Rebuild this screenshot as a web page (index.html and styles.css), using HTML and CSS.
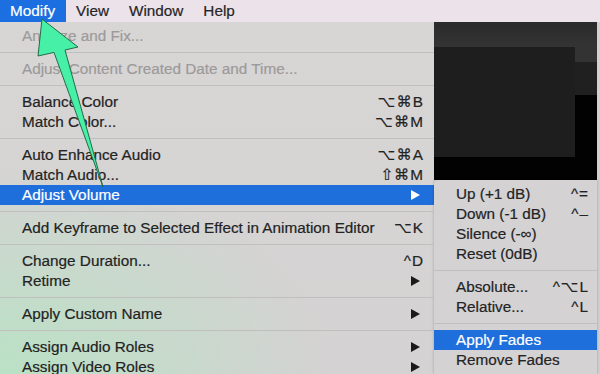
FILE: index.html
```html
<!DOCTYPE html>
<html lang="en">

<head>
    <meta charset="UTF-8">
    <meta name="viewport" content="width=device-width, initial-scale=1.0">
    <title>Modify Menu</title>
    <link rel="stylesheet" href="styles.css">
</head>

<body>
    <nav class="menubar">
        <div class="menubar-item active">Modify</div>
        <div class="menubar-item">View</div>
        <div class="menubar-item">Window</div>
        <div class="menubar-item">Help</div>
    </nav>

    <div class="screen">
        <ul class="menu">
            <li class="item disabled"><span>Analyze and Fix...</span></li>
            <li class="sep"></li>
            <li class="item disabled"><span>Adjust Content Created Date and Time...</span></li>
            <li class="sep"></li>
            <li class="item"><span>Balance Color</span><span class="key">⌥⌘B</span></li>
            <li class="item"><span>Match Color...</span><span class="key">⌥⌘M</span></li>
            <li class="sep"></li>
            <li class="item"><span>Auto Enhance Audio</span><span class="key">⌥⌘A</span></li>
            <li class="item"><span>Match Audio...</span><span class="key">⇧⌘M</span></li>
            <li class="item selected"><span>Adjust Volume</span><span class="arrow"></span></li>
            <li class="sep"></li>
            <li class="item"><span>Add Keyframe to Selected Effect in Animation Editor</span><span class="key">⌥K</span></li>
            <li class="sep"></li>
            <li class="item"><span>Change Duration...</span><span class="key">^D</span></li>
            <li class="item"><span>Retime</span><span class="arrow"></span></li>
            <li class="sep"></li>
            <li class="item"><span>Apply Custom Name</span><span class="arrow"></span></li>
            <li class="sep"></li>
            <li class="item"><span>Assign Audio Roles</span><span class="arrow"></span></li>
            <li class="item"><span>Assign Video Roles</span><span class="arrow"></span></li>
        </ul>

        <div class="side">
            <div class="viewer">
                <div class="viewer-top"></div>
                <div class="viewer-body">
                    <div class="viewer-frame"></div>
                    <div class="viewer-edge"></div>
                </div>
            </div>

            <ul class="menu submenu">
                <li class="item"><span>Up (+1 dB)</span><span class="key">^=</span></li>
                <li class="item"><span>Down (-1 dB)</span><span class="key">^–</span></li>
                <li class="item"><span>Silence (-∞)</span></li>
                <li class="item"><span>Reset (0dB)</span></li>
                <li class="sep"></li>
                <li class="item"><span>Absolute...</span><span class="key">^⌥L</span></li>
                <li class="item"><span>Relative...</span><span class="key">^L</span></li>
                <li class="sep"></li>
                <li class="item selected"><span>Apply Fades</span></li>
                <li class="item"><span>Remove Fades</span></li>
            </ul>
        </div>
    </div>

    <!-- pointer drawn over the menu -->
    <svg class="pointer" width="120" height="200" viewBox="0 0 120 200">
        <polygon points="42,19 78,47 65,50 103,187 54,52.4 38,56" fill="#46f0a6" stroke="#256b4a" stroke-width="1" stroke-linejoin="round" />
    </svg>
</body>

</html>
```

FILE: styles.css
```css
body {
    margin: 0;
    width: 600px;
    height: 374px;
    overflow: hidden;
    position: relative;
    background: #d2d0d1;
    font-family: 'Liberation Sans', 'DejaVu Sans', sans-serif;
    font-size: 15.3px;
    color: #232323;
    -webkit-text-stroke: 0.2px currentColor;
}

.menubar {
    display: flex;
    height: 22px;
    line-height: 22px;
    background: #ece2ea;
}

.menubar-item {
    padding: 0 10px;
    color: #262626;
}

.menubar-item.active {
    padding: 0 11px 0 10px;
    background: #1c6fe0;
    color: #fff;
}

.screen {
    display: flex;
    height: 352px;
}

.menu {
    list-style-type: none;
    margin: 0;
    padding: 4px 0 0;
    width: 434px;
    flex-shrink: 0;
    background:
        radial-gradient(ellipse 330px 210px at 0 100%, rgba(184, 226, 196, 0.95), rgba(214, 211, 211, 0)),
        linear-gradient(#d8d5d5, #d4d2d2);
}

.item {
    display: flex;
    justify-content: space-between;
    align-items: center;
    height: 20px;
    line-height: 20px;
    padding: 0 11px 0 22px;
    white-space: nowrap;
}

.item.disabled {
    color: #9c9a9a;
}

.item.selected {
    background: #1e6edc;
    color: #fff;
}

.sep {
    height: 13px;
    position: relative;
}

.sep::after {
    content: '';
    position: absolute;
    left: 0;
    right: 0;
    top: 6px;
    height: 1px;
    background: #c1bebe;
}

.key {
    letter-spacing: 1px;
    margin-right: -1px;
}

.arrow {
    width: 0;
    height: 0;
    margin-right: 3px;
    border-left: 9px solid #1a1a1a;
    border-top: 5px solid transparent;
    border-bottom: 5px solid transparent;
}

.item.selected .arrow {
    border-left-color: #fff;
}

.side {
    width: 163px;
    display: flex;
    flex-direction: column;
}

.viewer {
    height: 158px;
    background: #020202;
}

.viewer-top {
    height: 25px;
    background: linear-gradient(#2a2a2a, #343434);
}

.viewer-body {
    display: flex;
}

.viewer-frame {
    width: 141px;
    height: 110px;
    background: #1e1e1e;
}

.viewer-edge {
    flex: 1;
    height: 48px;
    background: linear-gradient(#333 0, #333 15px, #202020 15px);
}

.submenu {
    width: auto;
    flex: 1;
    background: #d4d2d3;
    border-top-left-radius: 4px;
    box-shadow: 0 0 3px rgba(0, 0, 0, 0.25);
}

.submenu .item {
    padding: 0 9px 0 22px;
}

.pointer {
    position: absolute;
    top: 0;
    left: 0;
}
```
